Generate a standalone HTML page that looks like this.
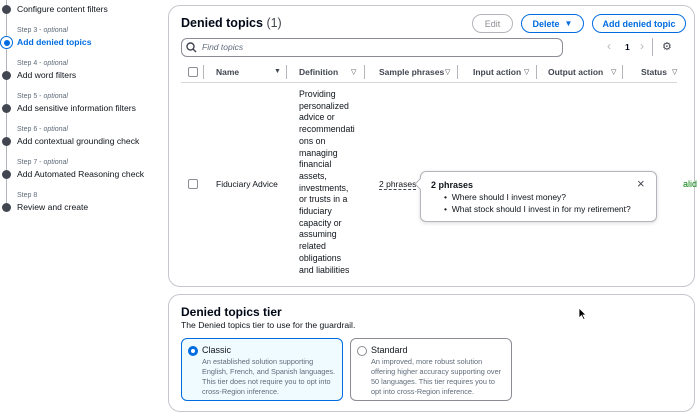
<!DOCTYPE html>
<html><head><style>
*{margin:0;padding:0;box-sizing:border-box}
body{width:700px;height:417px;overflow:hidden;background:#fff;font-family:"Liberation Sans",sans-serif;color:#000716;position:relative}
.a{position:absolute;white-space:nowrap}
.nav{font-size:8.6px;color:#0f141a}
.sm{font-size:7px;color:#5f6b7a}
.sm i{font-style:italic}
.dot{position:absolute;left:2px;width:9px;height:9px;border-radius:50%;background:#424650}
.card{position:absolute;border:1px solid #c6c6cd;border-radius:12px;background:#fff}
.btn{position:absolute;height:19px;border-radius:10px;border:1.5px solid #006ce0;color:#006ce0;font-size:9px;font-weight:bold;display:flex;align-items:center;justify-content:center}
.th{font-size:8.5px;font-weight:bold;color:#424650}
.tri{font-size:7px;color:#424650}
.div{position:absolute;top:65px;width:1px;height:14px;background:#b4b4bb}
.cb{position:absolute;width:10px;height:10px;border:1px solid #8c8c94;border-radius:2px}
.def{font-size:8.8px;line-height:11.7px;color:#0f141a}
.opt{position:absolute;border-radius:6px;padding:5px 6px 0 20px;font-size:7.3px;line-height:10px;color:#5f6b7a}
.opt b{display:block;font-size:9px;color:#0f141a;font-weight:normal;margin-bottom:1px;line-height:12px}
.rad{position:absolute;left:6px;top:7px;width:10px;height:10px;border-radius:50%}
</style></head><body>
<!-- nav -->
<div style="position:absolute;left:6px;top:0;width:1px;height:212px;background:#b4b4bb"></div>
<div class="dot" style="top:5px"></div><div class="a nav" style="left:17px;top:4px">Configure content filters</div>
<div class="a sm" style="left:17px;top:27px">Step 3 - <i>optional</i></div>
<div style="position:absolute;left:0;top:36px;width:13px;height:13px;border-radius:50%;border:1.5px solid #006ce0;background:#fff"></div>
<div style="position:absolute;left:3.5px;top:39.5px;width:6px;height:6px;border-radius:50%;background:#006ce0"></div>
<div class="a nav" style="left:17px;top:37px;color:#006ce0;font-weight:bold">Add denied topics</div>
<div class="a sm" style="left:17px;top:60px">Step 4 - <i>optional</i></div>
<div class="dot" style="top:71px"></div><div class="a nav" style="left:17px;top:70px">Add word filters</div>
<div class="a sm" style="left:17px;top:93px">Step 5 - <i>optional</i></div>
<div class="dot" style="top:104px"></div><div class="a nav" style="left:17px;top:103px">Add sensitive information filters</div>
<div class="a sm" style="left:17px;top:126px">Step 6 - <i>optional</i></div>
<div class="dot" style="top:137px"></div><div class="a nav" style="left:17px;top:136px">Add contextual grounding check</div>
<div class="a sm" style="left:17px;top:159px">Step 7 - <i>optional</i></div>
<div class="dot" style="top:170px"></div><div class="a nav" style="left:17px;top:169px">Add Automated Reasoning check</div>
<div class="a sm" style="left:17px;top:192px">Step 8</div>
<div class="dot" style="top:203px"></div><div class="a nav" style="left:17px;top:202px">Review and create</div>

<!-- card1 -->
<div class="card" style="left:168px;top:5px;width:527px;height:282px"></div>
<div class="a" style="left:181px;top:16px;font-size:12.5px;font-weight:bold">Denied topics <span style="font-weight:normal;color:#424650">(1)</span></div>
<div class="btn" style="left:472px;top:14px;width:41px;border-color:#b4b4bb;color:#8c8c94;font-weight:normal">Edit</div>
<div class="btn" style="left:521px;top:14px;width:63px">Delete&nbsp;&nbsp;<span style="font-size:8px">▼</span></div>
<div class="btn" style="left:592px;top:14px;width:94px">Add denied topic</div>
<div style="position:absolute;left:181px;top:38px;width:382px;height:19px;border:1px solid #8c8c94;border-radius:6px"></div>
<svg class="a" style="left:186px;top:42px" width="11" height="11" viewBox="0 0 11 11"><circle cx="4.5" cy="4.5" r="3.5" fill="none" stroke="#424650" stroke-width="1.4"/><path d="M7 7l3 3" stroke="#424650" stroke-width="1.4"/></svg>
<div class="a" style="left:202px;top:42px;font-size:8.5px;font-style:italic;color:#5f6b7a">Find topics</div>
<div class="a" style="left:607px;top:39px;font-size:12px;color:#b4b4bb">‹</div>
<div class="a" style="left:625px;top:42px;font-size:8.5px;font-weight:bold">1</div>
<div class="a" style="left:640px;top:39px;font-size:12px;color:#b4b4bb">›</div>
<div style="position:absolute;left:652px;top:38px;width:1px;height:18px;background:#b4b4bb"></div>
<div class="a" style="left:662px;top:40px;font-size:11px;color:#424650">⚙</div>
<div class="cb" style="left:188px;top:67px"></div>
<div class="div" style="left:203px"></div>
<div class="a th" style="left:216px;top:67px">Name</div><div class="a tri" style="left:274px;top:68px">▼</div>
<div class="div" style="left:286px"></div>
<div class="a th" style="left:299px;top:67px">Definition</div><div class="a tri" style="left:351px;top:68px">▽</div>
<div class="div" style="left:364px"></div>
<div class="a th" style="left:379px;top:67px">Sample phrases</div><div class="a tri" style="left:445px;top:68px">▽</div>
<div class="div" style="left:457px"></div>
<div class="a th" style="left:473px;top:67px">Input action</div><div class="a tri" style="left:524px;top:68px">▽</div>
<div class="div" style="left:536px"></div>
<div class="a th" style="left:548px;top:67px">Output action</div><div class="a tri" style="left:611px;top:68px">▽</div>
<div class="div" style="left:622px"></div>
<div class="a th" style="left:641px;top:67px">Status</div><div class="a tri" style="left:672px;top:68px">▽</div>
<div style="position:absolute;left:181px;top:82px;width:496px;height:1px;background:#d5d5da"></div>
<div class="cb" style="left:188px;top:179px"></div>
<div class="a" style="left:216px;top:179px;font-size:8.5px;color:#0f141a">Fiduciary Advice</div>
<div class="a def" style="left:299px;top:89px">Providing<br>personalized<br>advice or<br>recommendati<br>ons on<br>managing<br>financial<br>assets,<br>investments,<br>or trusts in a<br>fiduciary<br>capacity or<br>assuming<br>related<br>obligations<br>and liabilities</div>
<div class="a" style="left:379px;top:179px;font-size:8.5px;color:#0f141a;border-bottom:1px dashed #424650;line-height:10px">2 phrases</div>
<div class="a" style="left:683px;top:179px;font-size:9px;color:#037f0c">alid</div>
<div style="position:absolute;left:420px;top:171px;width:237px;height:51px;border:1px solid #b4b4bb;border-radius:6px;background:#fff;box-shadow:0 1px 4px rgba(0,0,0,.15)"></div>
<div style="position:absolute;left:416px;top:180px;width:8px;height:8px;background:#fff;border-left:1px solid #b4b4bb;border-bottom:1px solid #b4b4bb;transform:rotate(45deg)"></div>
<div class="a" style="left:431px;top:180px;font-size:9px;font-weight:bold;color:#0f141a">2 phrases</div>
<div class="a" style="left:637px;top:176px;font-size:13px;color:#424650">×</div>
<div class="a" style="left:444px;top:192px;font-size:8.5px;line-height:11.5px;color:#0f141a">•&nbsp; Where should I invest money?<br>•&nbsp; What stock should I invest in for my retirement?</div>

<!-- card2 -->
<div class="card" style="left:168px;top:294px;width:527px;height:118px"></div>
<div class="a" style="left:181px;top:305px;font-size:12px;font-weight:bold">Denied topics tier</div>
<div class="a" style="left:181px;top:320px;font-size:8.6px;color:#0f141a">The Denied topics tier to use for the guardrail.</div>
<div class="opt" style="left:181px;top:338px;width:162px;height:63px;border:1.5px solid #006ce0;background:#f0fbff"><b>Classic</b>An established solution supporting English, French, and Spanish languages. This tier does not require you to opt into cross-Region inference.<div class="rad" style="border:3px solid #006ce0;background:#fff"></div></div>
<div class="opt" style="left:350px;top:338px;width:162px;height:63px;border:1px solid #8c8c94"><b>Standard</b>An improved, more robust solution offering higher accuracy supporting over 50 languages. This tier requires you to opt into cross-Region inference.<div class="rad" style="border:1px solid #8c8c94"></div></div>
<svg class="a" style="left:578px;top:307px" width="9" height="13" viewBox="0 0 9 13"><path d="M1 1v10l2.5-2.5 2 4 1.5-.7-2-3.8H8z" fill="#000" stroke="#fff" stroke-width=".8"/></svg>
</body></html>
